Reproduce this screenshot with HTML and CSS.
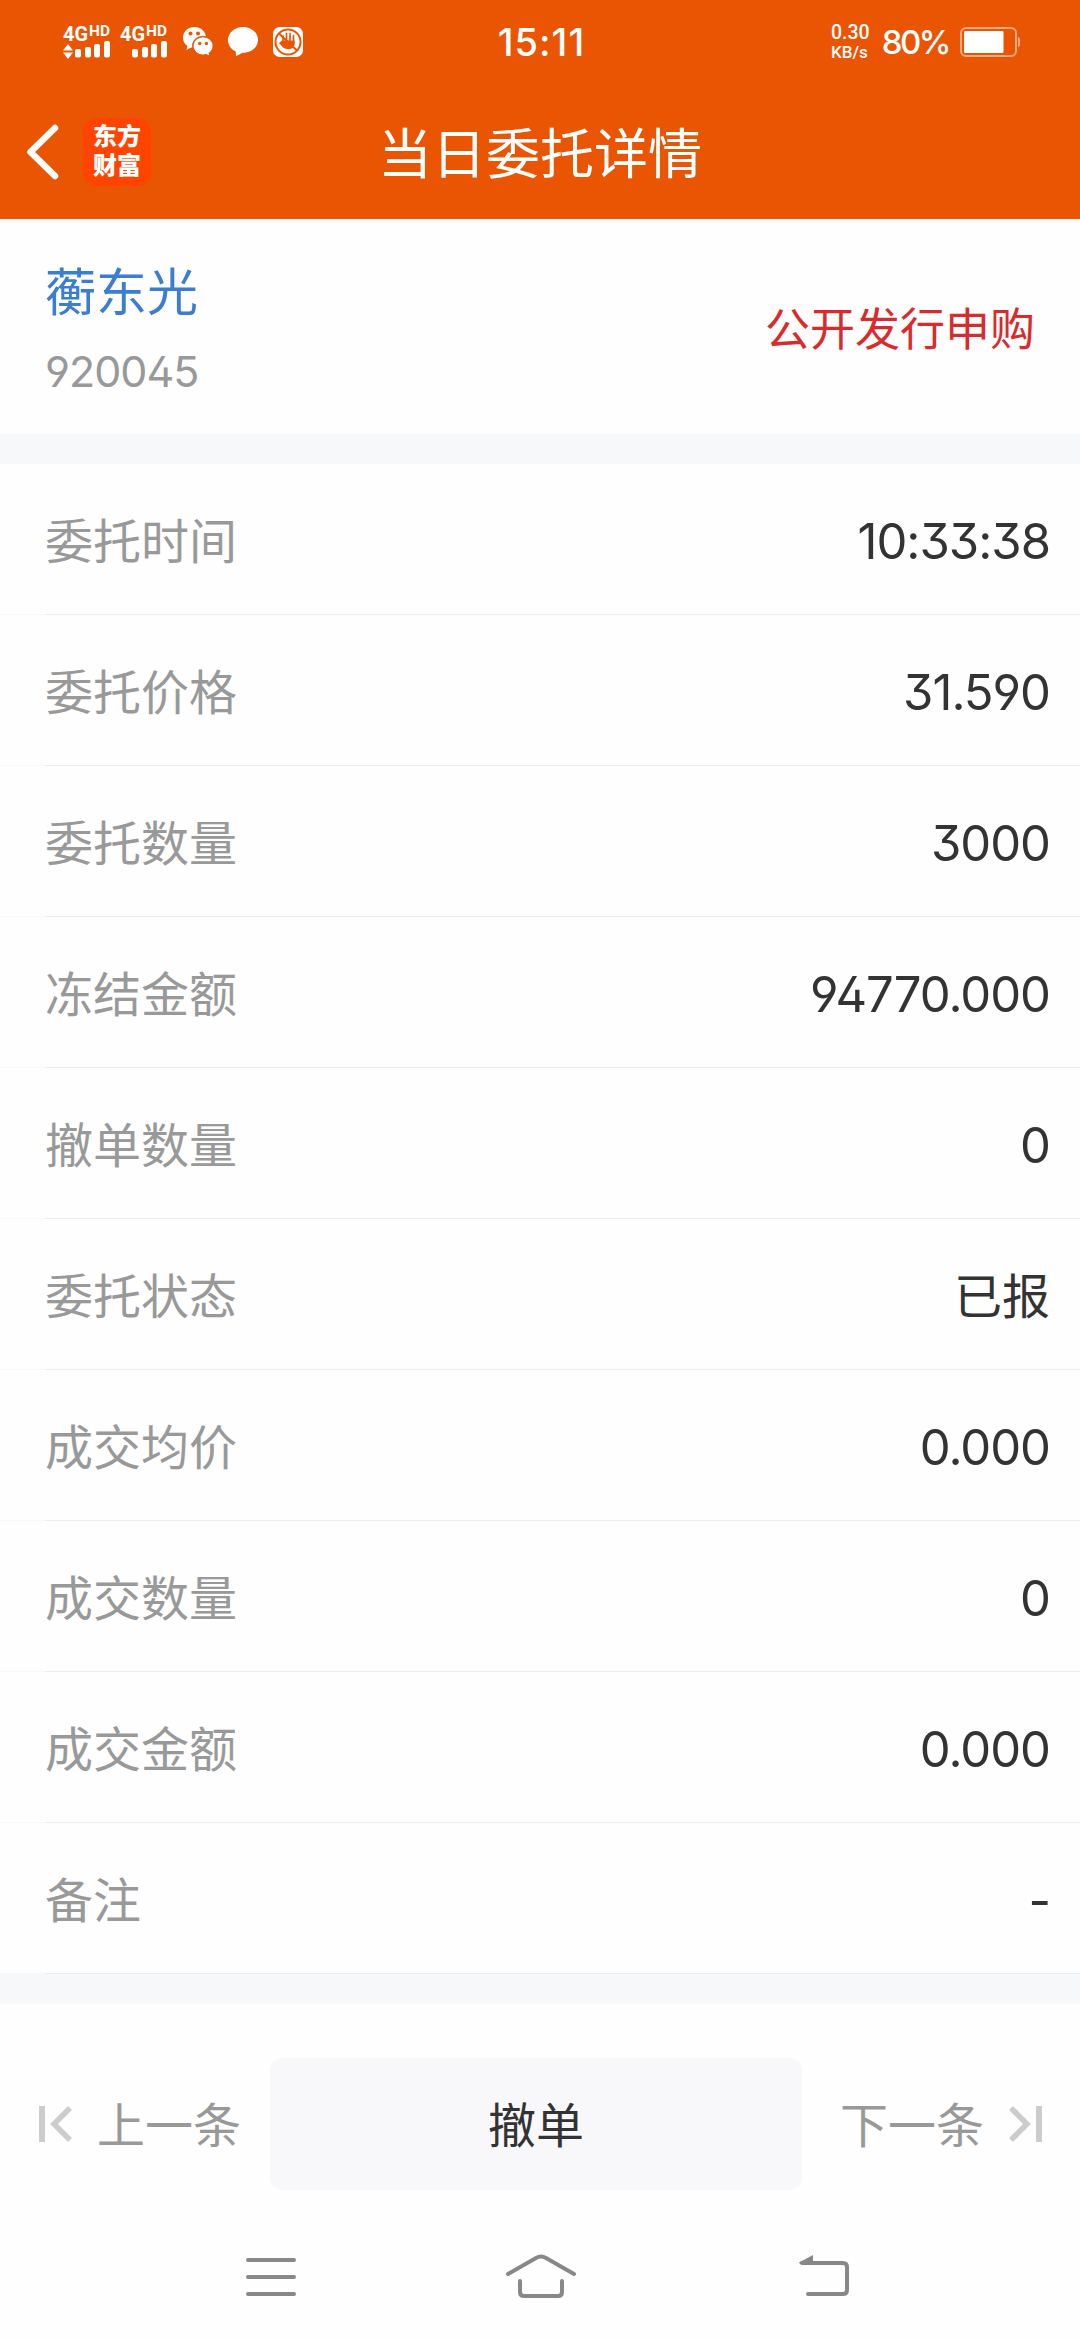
FILE: index.html
```html
<!DOCTYPE html>
<html lang="zh-CN">

<head>
  <meta charset="UTF-8" />
  <title>当日委托详情</title>
  <link rel="stylesheet" href="styles.css">
</head>

<body>
  <header class="header">
    <div class="status-bar">
      <div class="status-left">
        <svg class="signals" width="106" height="40" viewBox="0 -4 106 40" fill="#fff">
          <text class="net" x="0" y="15" textLength="25" lengthAdjust="spacingAndGlyphs">4G</text>
          <text class="hd" x="26" y="10" textLength="21" lengthAdjust="spacingAndGlyphs">HD</text>
          <path d="M0 24.500l5-6.500 5 6.500zM0 26.500l5 6.500 5-6.500z" />
          <rect x="12" y="23" width="6" height="8.500" rx="2" />
          <rect x="22" y="21" width="6" height="10.500" rx="2" />
          <rect x="31" y="18" width="6" height="13.500" rx="2" />
          <rect x="41" y="15" width="6" height="16.500" rx="2" />
          <text class="net" x="57" y="15" textLength="25" lengthAdjust="spacingAndGlyphs">4G</text>
          <text class="hd" x="83" y="10" textLength="21" lengthAdjust="spacingAndGlyphs">HD</text>
          <rect x="69" y="23" width="6" height="8.500" rx="2" />
          <rect x="79" y="21" width="6" height="10.500" rx="2" />
          <rect x="88" y="18" width="6" height="13.500" rx="2" />
          <rect x="98" y="15" width="6" height="16.500" rx="2" />
        </svg>
        <!-- 微信 -->
        <svg width="30" height="30" viewBox="0 0 30 30">
          <path fill="#fff" d="M11.500 0C5 0 0 4.700 0 10.700c0 3.400 1.700 6.300 4.400 8.300L3.500 23l4.700-2.400c1 .3 2.200.4 3.300.4C18 21 23 16.500 23 10.700S18 0 11.500 0z" />
          <path fill="#fff" stroke="#ea5504" stroke-width="1.500" d="M20 9.500c-5.700 0-10.200 4.100-10.200 9.300S14.300 28.300 20 28.300c1.200 0 2.400-.2 3.400-.5l3.800 2-.8-3.500c2.500-1.700 3.900-4.400 3.900-7.500 0-5.200-4.600-9.300-10.300-9.300z" />
          <g fill="#ea5504">
            <circle cx="7.500" cy="6.500" r="2" /><circle cx="15" cy="6.500" r="2" />
            <circle cx="16.800" cy="16.500" r="1.700" /><circle cx="23.400" cy="16.500" r="1.700" />
          </g>
        </svg>
        <!-- 短信 -->
        <svg width="30" height="30" viewBox="0 0 30 30">
          <path fill="#fff" d="M15 0C6.700 0 0 5.700 0 13c0 5 3 9.200 7.700 11.400L8 29.300l6.500-3.500H15c8.300 0 15-5.500 15-12.800S23.300 0 15 0z" />
        </svg>
        <!-- 勿扰手势 -->
        <svg width="30" height="30" viewBox="0 0 30 30">
          <rect width="30" height="30" rx="6.500" fill="#fff" />
          <circle cx="15" cy="15" r="12.500" fill="none" stroke="#ea5504" stroke-width="2" />
          <path d="M10 9v5M13.500 6.500v8M17 6.500v8M20.500 8.500v7" stroke="#ea5504" stroke-width="1.700" stroke-linecap="round" />
          <path d="M9 13.500h12.500c1 4.500-1 8.500-4.500 8.500h-3c-3 0-5.500-3-8-6z" fill="#ea5504" />
          <path d="M6 6.500l18 17" stroke="#ea5504" stroke-width="2" />
        </svg>
      </div>
      <span class="clock">15:11</span>
      <div class="status-right">
        <div class="speed"><span class="speed-num">0.30</span><span class="speed-unit">KB/s</span></div>
        <span class="percent">80%</span>
        <svg width="60" height="30" viewBox="0 0 60 30">
          <rect x="1" y="1" width="55" height="28" rx="5" fill="none" stroke="#f8ab80" stroke-width="2" />
          <rect x="4" y="4" width="39.500" height="22" rx="1" fill="#fff" />
          <path d="M58 10c1.500 0 2 1.500 2 2.500v5c0 1-.5 2.500-2 2.500z" fill="#f8ab80" />
        </svg>
      </div>
    </div>
    <div class="nav-bar">
      <div class="nav-left">
        <svg width="34" height="56" viewBox="0 0 34 56" fill="none" stroke="#fff" stroke-width="6.500" stroke-linecap="round" stroke-linejoin="round">
          <path d="M30 4L5.500 28 30 52" />
        </svg>
        <div class="logo"><span>东方</span><span>财富</span></div>
      </div>
      <h1 class="title">当日委托详情</h1>
    </div>
  </header>

  <section class="stock">
    <div>
      <div class="stock-name">蘅东光</div>
      <div class="stock-code">920045</div>
    </div>
    <div class="stock-type">公开发行申购</div>
  </section>

  <ul class="detail">
    <li><span class="label">委托时间</span><span class="value">10:33:38</span></li>
    <li><span class="label">委托价格</span><span class="value">31.590</span></li>
    <li><span class="label">委托数量</span><span class="value">3000</span></li>
    <li><span class="label">冻结金额</span><span class="value">94770.000</span></li>
    <li><span class="label">撤单数量</span><span class="value">0</span></li>
    <li><span class="label">委托状态</span><span class="value cn">已报</span></li>
    <li><span class="label">成交均价</span><span class="value">0.000</span></li>
    <li><span class="label">成交数量</span><span class="value">0</span></li>
    <li><span class="label">成交金额</span><span class="value">0.000</span></li>
    <li><span class="label">备注</span><span class="value">-</span></li>
  </ul>

  <div class="actions">
    <a class="step">
      <svg width="34" height="36" viewBox="0 0 34 36" fill="none" stroke="#ccc">
        <path d="M3 0v36" stroke-width="6" /><path d="M31 2L15 18l16 16" stroke-width="5.500" />
      </svg>
      <span>上一条</span>
    </a>
    <button class="cancel">撤单</button>
    <a class="step next">
      <span>下一条</span>
      <svg width="34" height="36" viewBox="0 0 34 36" fill="none" stroke="#ccc">
        <path d="M3 2l16 16L3 34" stroke-width="5.500" /><path d="M31 0v36" stroke-width="6" />
      </svg>
    </a>
  </div>

  <nav class="sys-nav">
    <svg width="50" height="46" viewBox="0 0 50 46">
      <path d="M2 6h46M2 23h46M2 40h46" />
    </svg>
    <svg class="home" width="72" height="46" viewBox="0 0 72 46">
      <path d="M3 20L31 4q5-3 10 0l28 16M15 27v11q0 4 4 4h34q4 0 4-4V27" />
    </svg>
    <svg width="52" height="46" viewBox="0 0 52 46">
      <path d="M4 9h41q4 0 4 4v23q0 4-4 4H10" />
      <path class="tip" d="M1 8.500L15 1v9H2z" />
    </svg>
  </nav>
</body>

</html>
```
FILE: styles.css
```css
* {
  box-sizing: border-box;
}

body {
  margin: 0;
  width: 1080px;
  height: 2340px;
  background-color: #fefefe;
  font-family: Inter, "Noto Sans CJK SC", sans-serif;
  font-size: 48px;
  line-height: 1;
  color: #333;
}

svg {
  display: block;
  flex: none;
}

/* 顶部 */
.header {
  height: 219px;
  background-color: #ea5504;
  color: #fff;
}

.status-bar {
  height: 84px;
  display: grid;
  grid-template-columns: 1fr auto 1fr;
  align-items: center;
  padding: 0 60px 0 63px;
}

.status-left,
.status-right {
  display: flex;
  align-items: center;
}

.status-left {
  gap: 15px;
}

.status-right {
  justify-content: flex-end;
}

.signals {
  margin-right: -1px;
  overflow: visible;
}

.net {
  font: bold 20px Roboto, sans-serif;
}

.hd {
  font: bold 14px Roboto, sans-serif;
}

.clock {
  font-size: 38px;
  font-weight: 500;
  letter-spacing: 1px;
}

.speed {
  display: flex;
  flex-direction: column;
  gap: 1px;
  margin-right: 12px;
  font-family: Roboto, sans-serif;
  font-weight: 500;
}

.speed-num {
  font-size: 19.5px;
}

.speed-unit {
  font-size: 17px;
}

.percent {
  margin-right: 11px;
  font-size: 33px;
  font-weight: 500;
  letter-spacing: -2.5px;
}

.nav-bar {
  height: 135px;
  display: grid;
  grid-template-columns: 1fr auto 1fr;
  align-items: center;
}

.nav-left {
  display: flex;
  align-items: center;
  gap: 24px;
  padding-left: 25px;
}

.logo {
  width: 68px;
  height: 68px;
  padding-top: 4px;
  border-radius: 14px;
  background-color: #ff4400;
  display: flex;
  flex-direction: column;
  align-items: center;
  font-size: 24px;
  font-weight: 900;
  line-height: 29px;
}

.title {
  margin: 0;
  padding-top: 7px;
  font-size: 54px;
  font-weight: 400;
}

/* 股票信息 */
.stock {
  height: 215px;
  display: flex;
  justify-content: space-between;
  align-items: center;
  padding: 6px 45px 0;
}

.stock-name {
  font-size: 51px;
  color: #3b7dd0;
}

.stock-code {
  margin-top: 32px;
  font-size: 43px;
  letter-spacing: -1px;
  font-feature-settings: "ss01";
  color: #999;
}

.stock-type {
  font-size: 45px;
  color: #d92b2b;
}

/* 委托明细 */
.detail {
  margin: 0;
  padding: 0;
  list-style: none;
  border-top: 30px solid #f7f8fa;
  border-bottom: 30px solid #f7f8fa;
}

.detail li {
  height: 151px;
  display: flex;
  justify-content: space-between;
  align-items: center;
  padding: 4px 30px 0 45px;
  background: linear-gradient(to right, #f8f8f8 45px, #ececec 45px) bottom / 100% 1px no-repeat;
}

.label {
  color: #999;
}

.value {
  font-size: 49px;
  letter-spacing: -1px;
  font-feature-settings: "ss01";
}

.value.cn {
  font-size: 48px;
  letter-spacing: 0;
}

/* 底部操作 */
.actions {
  height: 240px;
  display: flex;
  align-items: flex-start;
  padding: 54px 38px 0 39px;
}

.step {
  width: 231px;
  height: 132px;
  display: flex;
  align-items: center;
  gap: 24px;
  color: #999;
}

.step span {
  padding-top: 3px;
}

.step.next {
  width: 240px;
  justify-content: flex-end;
}

.cancel {
  width: 532px;
  height: 132px;
  padding: 4px 0 0;
  border: 0;
  border-radius: 12px;
  background-color: #f8f8fb;
  font: inherit;
  color: #333;
}

.sys-nav {
  display: flex;
  padding: 10px 0 0 246px;
}

.sys-nav .home {
  margin: 0 221px 0 209px;
}

.sys-nav path {
  fill: none;
  stroke: #888;
  stroke-width: 4;
  stroke-linecap: round;
}

.sys-nav .tip {
  fill: #888;
  stroke: none;
}
```
